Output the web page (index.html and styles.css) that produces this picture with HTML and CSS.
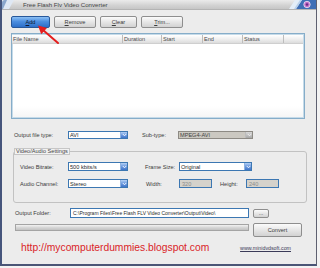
FILE: index.html
```html
<!DOCTYPE html>
<html>
<head>
<meta charset="utf-8">
<link rel="stylesheet" href="styles.css">
</head>
<body>
<div class="window">
  <div class="titlebar">
    <svg class="ticon" width="12" height="9" viewBox="0 0 12 9"><path d="M0 9 L0 3 Q0 0 3 0 L12 0 L7 9 Z" fill="#dfe8f4"/><path d="M0 9 L0 3 Q0 0 3 0 L5 0 L1 9 Z" fill="#8aa6cc"/></svg>
    <span class="title">Free Flash Flv Video Converter</span>
    <svg class="tcorner" width="30" height="9" viewBox="0 0 30 9">
      <polygon points="3,9 9,0 16,0 10,9" fill="#e4eef8"/>
      <polygon points="10,9 16,0 30,0 30,9" fill="#3f6fb6"/>
      <polygon points="8,9 14,0 16,0 10,9" fill="#b8d0ec"/>
      <circle cx="21" cy="4.5" r="3.2" fill="#c070c8" stroke="#f2e6f6" stroke-width="0.8"/>
      <circle cx="21" cy="4.5" r="1.2" fill="#6a2a86"/>
    </svg>
  </div>
  <div class="content">
    <div class="toolbar">
      <div class="btn primary w-add"><span><u>A</u>dd</span></div>
      <div class="btn w-rem"><span><u>R</u>emove</span></div>
      <div class="btn w-clr"><span><u>C</u>lear</span></div>
      <div class="btn w-trim"><span><u>T</u>rim...</span></div>
    </div>
    <div class="list">
      <div class="lhead">
        <span class="col c-name">File Name</span>
        <span class="col c-dur">Duration</span>
        <span class="col c-start">Start</span>
        <span class="col c-end">End</span>
        <span class="col c-stat">Status</span>
        <span class="col c-rest"></span>
      </div>
      <div class="lbody"></div>
    </div>
    <div class="row typerow">
      <span class="lbl l-type">Output file type:</span>
      <div class="sel s-60"><span class="val">AVI</span><span class="dd"><svg width="5" height="4" viewBox="0 0 5 4"><path d="M0.8 1 L2.5 2.8 L4.2 1" fill="none" stroke="#fff" stroke-width="0.9"/></svg></span></div>
      <span class="lbl l-sub">Sub-type:</span>
      <div class="sel dis s-75"><span class="val">MPEG4-AVI</span><span class="dd"><svg width="5" height="4" viewBox="0 0 5 4"><path d="M0.8 1 L2.5 2.8 L4.2 1" fill="none" stroke="#f4f4f4" stroke-width="0.9"/></svg></span></div>
    </div>
    <fieldset class="settings">
      <legend>Video/Audio Settings</legend>
      <div class="frow">
        <span class="lbl l-in">Video Bitrate:</span>
        <div class="sel s-60"><span class="val">500 kbits/s</span><span class="dd"><svg width="5" height="4" viewBox="0 0 5 4"><path d="M0.8 1 L2.5 2.8 L4.2 1" fill="none" stroke="#fff" stroke-width="0.9"/></svg></span></div>
        <span class="lbl l-frame">Frame Size:</span>
        <div class="sel s-73"><span class="val">Original</span><span class="dd"><svg width="5" height="4" viewBox="0 0 5 4"><path d="M0.8 1 L2.5 2.8 L4.2 1" fill="none" stroke="#fff" stroke-width="0.9"/></svg></span></div>
      </div>
      <div class="frow second">
        <span class="lbl l-in">Audio Channel:</span>
        <div class="sel s-60"><span class="val">Stereo</span><span class="dd"><svg width="5" height="4" viewBox="0 0 5 4"><path d="M0.8 1 L2.5 2.8 L4.2 1" fill="none" stroke="#fff" stroke-width="0.9"/></svg></span></div>
        <span class="lbl l-width">Width:</span>
        <div class="num">320</div>
        <span class="lbl l-height">Height:</span>
        <div class="num">240</div>
      </div>
    </fieldset>
    <div class="row folder">
      <span class="lbl l-folder">Output Folder:</span>
      <div class="path">C:\Program Files\Free Flash FLV Video Converter\Output\Video\</div>
      <div class="btn dots"><span>...</span></div>
    </div>
    <div class="row prog">
      <div class="bar"></div>
      <div class="btn convert"><span>Convert</span></div>
    </div>
    <div class="footer">
      <span class="blog">http://mycomputerdummies.blogspot.com</span>
      <span class="site">www.minidvdsoft.com</span>
    </div>
  </div>
  <svg class="arrow" width="70" height="50" viewBox="0 0 70 50">
    <line x1="43" y1="30" x2="58" y2="43" stroke="#e41e1e" stroke-width="2" stroke-linecap="round"/>
    <polygon points="38,25.5 41.2,34.2 47,28" fill="#e41e1e"/>
  </svg>
</div>
</body>
</html>
```
FILE: styles.css
```css
* { box-sizing: border-box; }
html, body { margin: 0; padding: 0; }
body {
  width: 320px;
  height: 268px;
  overflow: hidden;
  background: #f3f3f3;
  font-family: "Liberation Sans", Arial, sans-serif;
  font-size: 5.6px;
  color: #3a3a3a;
}
.window {
  position: relative;
  width: 317px;
  height: 266px;
  background: #ececec;
  border-left: 2px solid #46557c;
  border-right: 1px solid #5e6070;
  border-bottom: 2px solid #4a5576;
  display: flex;
  flex-direction: column;
}
.titlebar {
  height: 10px;
  flex: none;
  display: flex;
  align-items: center;
  background: linear-gradient(#ebebeb, #d2d2d2 60%, #c6c6c6);
  border-bottom: 1px solid #b4b4b4;
}
.ticon { flex: none; align-self: flex-start; }
.title {
  margin-left: 9px;
  font-size: 6.1px;
  color: #444;
  white-space: nowrap;
}
.tcorner { margin-left: auto; flex: none; align-self: flex-start; }

.content {
  flex: 1;
  display: flex;
  flex-direction: column;
}
.toolbar {
  margin: 6px 0 0 9px;
  height: 12px;
  display: flex;
  gap: 4px;
}
.btn {
  height: 100%;
  display: flex;
  align-items: center;
  justify-content: center;
  border: 1px solid #8e8e8e;
  border-radius: 2px;
  background: linear-gradient(#fbfbfb, #e6e6e6 50%, #d2d2d2);
  color: #3a3a3a;
  white-space: nowrap;
}
.btn.primary {
  background: linear-gradient(#8cc0f4, #4c8ee0 45%, #2d6fc8);
  border-color: #28589a;
  color: #0e1a30;
}
.w-add { width: 39px; }
.w-rem { width: 42px; }
.w-clr { width: 37px; }
.w-trim { width: 42px; }

.list {
  margin: 5px 0 0 9px;
  width: 294px;
  height: 86px;
  border: 1px solid #86adc9;
  box-shadow: inset 0 0 0 1px #c6dbe9;
  background: #fff;
  display: flex;
  flex-direction: column;
}
.lhead {
  height: 9px;
  display: flex;
  background: linear-gradient(#ffffff, #ececec 60%, #dcdcdc);
  border-bottom: 1px solid #cfcfcf;
  margin: 1px 1px 0 0;
}
.col {
  height: 100%;
  display: flex;
  align-items: center;
  padding-left: 1px;
  border-right: 1px solid #bdbdbd;
  color: #4a4a4a;
  white-space: nowrap;
}
.c-name { width: 111px; }
.c-dur { width: 39px; }
.c-start { width: 41px; }
.c-end { width: 40px; }
.c-stat { width: 41px; }
.c-rest { flex: 1; border-right: none; }
.lbody {
  flex: 1;
  background: linear-gradient(#fff 85%, #f6f6f6);
  margin: 0 1px 1px 1px;
}

.row { display: flex; align-items: center; }
.lbl { white-space: nowrap; color: #3a3a3a; flex: none; }
.typerow { margin: 12px 0 0 12px; height: 8px; }
.l-type { width: 54px; }
.l-sub { margin-left: 14px; width: 36px; }

.sel {
  height: 100%;
  display: flex;
  align-items: stretch;
  background: #fff;
  border: 1px solid #3c77b2;
  flex: none;
}
.sel .val {
  flex: 1;
  display: flex;
  align-items: center;
  padding-left: 1px;
  white-space: nowrap;
  color: #2a2a2a;
}
.sel .dd {
  width: 7px;
  margin: 0;
  display: flex;
  align-items: center;
  justify-content: center;
  background: linear-gradient(#b4d0f4, #6c9ae0 50%, #3f74c8);
  border-left: 1px solid #8fb2e0;
}
.sel.dis { background: #cbc8c1; border-color: #8d8a84; }
.sel.dis .val { color: #444; }
.sel.dis .dd { background: linear-gradient(#d8d8d8, #a8a8a8); border-left-color: #bcbcbc; }
.s-60 { width: 60px; }
.s-75 { width: 75px; }
.s-73 { width: 73px; }

.settings {
  margin: 9px 0 0 11px;
  width: 294px;
  padding: 7px 0 14px 0;
  border: 1px solid #c2c2c2;
  border-radius: 3px;
  min-inline-size: 0;
}
.settings legend {
  margin-left: 0;
  padding: 0 1px;
  font-size: 5.6px;
  line-height: 5px;
  border: 1px solid #c6c6c6;
  background: #f2f2f2;
  color: #444;
}
.frow {
  display: flex;
  align-items: center;
  height: 9px;
  margin-left: 6px;
}
.frow.second { margin-top: 8px; }
.l-in { width: 48px; }
.l-frame { margin-left: 17px; width: 34px; }
.l-width { margin-left: 18px; width: 33px; }
.l-height { margin-left: 8px; width: 26px; }
.num {
  width: 33px;
  height: 100%;
  border: 1px solid #3c77b2;
  background: #d5d2cb;
  color: #8a8a8a;
  display: flex;
  align-items: center;
  padding-left: 2px;
  flex: none;
}

.folder { margin: 5px 0 0 13px; height: 10px; }
.l-folder { width: 55px; }
.path {
  width: 179px;
  height: 100%;
  border: 1px solid #3c77b2;
  background: #fff;
  display: flex;
  align-items: center;
  padding-left: 2px;
  white-space: nowrap;
  overflow: hidden;
  font-size: 5px;
  color: #2a2a2a;
}
.btn.dots { margin-left: 4px; width: 16px; height: 9px; }

.prog { margin: 5px 0 0 13px; height: 14px; align-items: flex-start; }
.bar {
  margin-top: 1px;
  width: 234px;
  height: 7px;
  border: 1px solid #a4a4a4;
  background: linear-gradient(#f2f2f2, #d6d6d6 50%, #c2c2c2);
}
.btn.convert { margin-left: 4px; width: 49px; height: 14px; }

.footer {
  margin: 5px 25px 0 19px;
  height: 12px;
  display: flex;
  align-items: center;
}
.blog {
  font-size: 10.3px;
  line-height: 12px;
  color: #da2428;
  white-space: nowrap;
}
.site {
  margin-left: auto;
  font-size: 5.3px;
  color: #3a3a58;
  text-decoration: underline;
  white-space: nowrap;
}
.arrow {
  position: absolute;
  left: -2px;
  top: 0;
  pointer-events: none;
}
```
